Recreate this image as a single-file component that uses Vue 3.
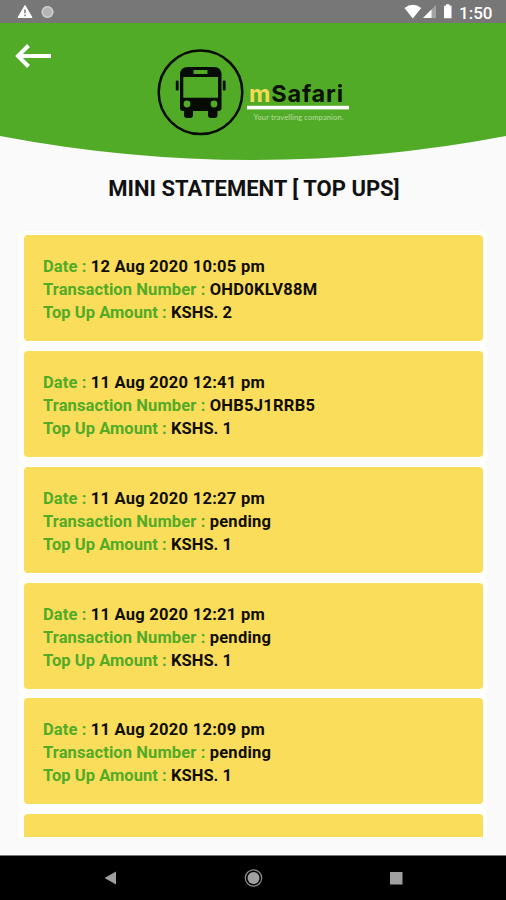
<script setup>
import { ref } from 'vue'

const statements = ref([
    { date: '12 Aug 2020 10:05 pm', number: 'OHD0KLV88M', amount: 2 },
    { date: '11 Aug 2020 12:41 pm', number: 'OHB5J1RRB5', amount: 1 },
    { date: '11 Aug 2020 12:27 pm', number: 'pending', amount: 1 },
    { date: '11 Aug 2020 12:21 pm', number: 'pending', amount: 1 },
    { date: '11 Aug 2020 12:09 pm', number: 'pending', amount: 1 },
    { partial: true }
])
</script>
<template>
    <div class="screen">
        <div class="status-bar">
            <svg class="status-left" width="60" height="23" viewBox="0 0 60 23">
                <path d="M25 5.5 L32 17.5 H18 Z" fill="#fff" stroke="#fff" stroke-linejoin="round" />
                <path d="M25 9.5 V13.3 M25 14.6 V16.2" stroke="#777" stroke-width="1.5" />
                <circle cx="47.5" cy="12" r="6" fill="#b5b5b5" />
                <circle cx="47.5" cy="12" r="5.2" fill="none" stroke="#cdcdcd" stroke-width="1.5" />
            </svg>
            <div class="status-right">
                <svg width="50" height="23" viewBox="0 0 50 23">
                    <path d="M0.5 8 Q8.8 1.5 17.2 8 L8.8 18.5 Z" fill="#fff" />
                    <path d="M32 5 V18 H19 Z" fill="#a3a3a3" />
                    <path d="M27.5 9.5 V18 H19 Z" fill="#fff" />
                    <path d="M42 4.3 H45.5 V5.7 H47.5 V18.2 H40 V5.7 H42 Z" fill="#fff" />
                </svg>
                <span class="clock">1:50</span>
            </div>
        </div>
        <header class="header">
            <svg width="506" height="138" viewBox="0 23 506 138">
                <path d="M0 23 H506 V136 Q253 184 0 136 Z" fill="#51ab27" />
                <!-- back -->
                <path d="M51 56 H18 M28.5 45.5 L18 56 L28.5 66.5" fill="none" stroke="#fff" stroke-width="4" />
                <!-- bus -->
                <circle cx="200.5" cy="92.3" r="41.8" fill="none" stroke="#060b04" stroke-width="2.5" />
                <g fill="#060b04">
                    <path fill-rule="evenodd" d="M188 67 H214 Q221.5 67 221.5 75 V108 Q221.5 111 218.5 111 H217.5 V115 Q217.5 118 214.5 118 H211 Q208 118 208 115 V111 H193 V115 Q193 118 190 118 H187 Q184 118 184 115 V111 H183 Q180 111 180 108 V75 Q180 67 188 67 Z M193.5 70 V74 H207.5 V70 Z M183.3 77 V97.7 H218 V77 Z" />
                    <rect x="175.8" y="80.5" width="2.8" height="10" rx="1.2" />
                    <rect x="222.8" y="80.5" width="2.8" height="10" rx="1.2" />
                </g>
                <circle cx="187" cy="104" r="3.4" fill="#51ab27" />
                <circle cx="214" cy="104" r="3.4" fill="#51ab27" />
                <text class="brand" x="249" y="102" textLength="94" lengthAdjust="spacing"><tspan fill="#f3dc55">m</tspan><tspan fill="#0a1205">Safari</tspan></text>
                <rect x="247" y="105.8" width="102" height="3.6" fill="#fff" />
                <text class="slogan" x="253.5" y="120.3" textLength="90">Your travelling companion.</text>
            </svg>
        </header>
        <h1 class="title">MINI STATEMENT [ TOP UPS]</h1>
        <main class="list">
            <div class="card" v-for="(item, index) in statements" :key="index">
                <div class="card-body">
                    <template v-if="!item.partial">
                        <p><span class="label">Date : </span>{{ item.date }}</p>
                        <p><span class="label">Transaction Number : </span>{{ item.number }}</p>
                        <p class="amount"><span class="label">Top Up Amount : </span>KSHS. {{ item.amount }}</p>
                    </template>
                </div>
            </div>
        </main>
        <nav class="nav-bar">
            <svg width="506" height="44" viewBox="0 856 506 44">
                <path d="M104.5 878 L116 871.5 V884.5 Z" fill="#a0a0a0" />
                <circle cx="253.5" cy="878" r="8.2" fill="none" stroke="#8c8c8c" stroke-width="1.2" />
                <circle cx="253.5" cy="878" r="6" fill="#a0a0a0" />
                <rect x="390" y="872" width="12.5" height="12.5" fill="#a0a0a0" />
            </svg>
        </nav>
    </div>
</template>
<style>
body {
    margin: 0;
    background: #fafafa;
}
</style>
<style scoped>
.screen {
    width: 506px;
    height: 900px;
    display: flex;
    flex-direction: column;
    overflow: hidden;
    background: #fafafa;
    font-family: Roboto, "Liberation Sans", sans-serif;
}

svg {
    display: block;
}

.status-bar {
    height: 23px;
    display: flex;
    justify-content: space-between;
    background: #777;
}

.status-right {
    display: flex;
    padding-right: 13px;
    gap: 5px;
}

.clock {
    width: 34px;
    line-height: 26px;
    font-size: 17px;
    font-weight: 500;
    color: #fff;
    white-space: nowrap;
}

.header {
    height: 138px;
}

.brand {
    font-family: Inter, "Open Sans", sans-serif;
    font-size: 23.5px;
    font-weight: 700;
}

.slogan {
    font-family: Lato, sans-serif;
    font-size: 7.5px;
    fill: #b9dda5;
}

.title {
    margin: 13px 0 0;
    padding-left: 2px;
    height: 56.5px;
    line-height: 30px;
    text-align: center;
    font-size: 22px;
    font-weight: 700;
    color: #111;
}

.list {
    height: 606px;
    margin: 0 19px;
    overflow: hidden;
}

.card {
    box-sizing: border-box;
    height: 115.75px;
    padding: 4.75px 4px 5px 5px;
    border-radius: 5px;
    background: #fff;
}

.card-body {
    box-sizing: border-box;
    height: 106px;
    padding: 20px 19px;
    border-radius: 4px;
    background: #fadd5a;
}

.card p {
    margin: 0;
    height: 23px;
    line-height: 23px;
    font-size: 16.5px;
    font-weight: 700;
    letter-spacing: 0.27px;
    color: #100d04;
    white-space: nowrap;
}

.card .label {
    letter-spacing: 0.11px;
    color: #51ab27;
}

.card .amount,
.card .amount .label {
    letter-spacing: 0.05px;
}

.nav-bar {
    margin-top: auto;
    height: 44px;
    border-top: 1px solid #777;
    background: #000;
}
</style>
